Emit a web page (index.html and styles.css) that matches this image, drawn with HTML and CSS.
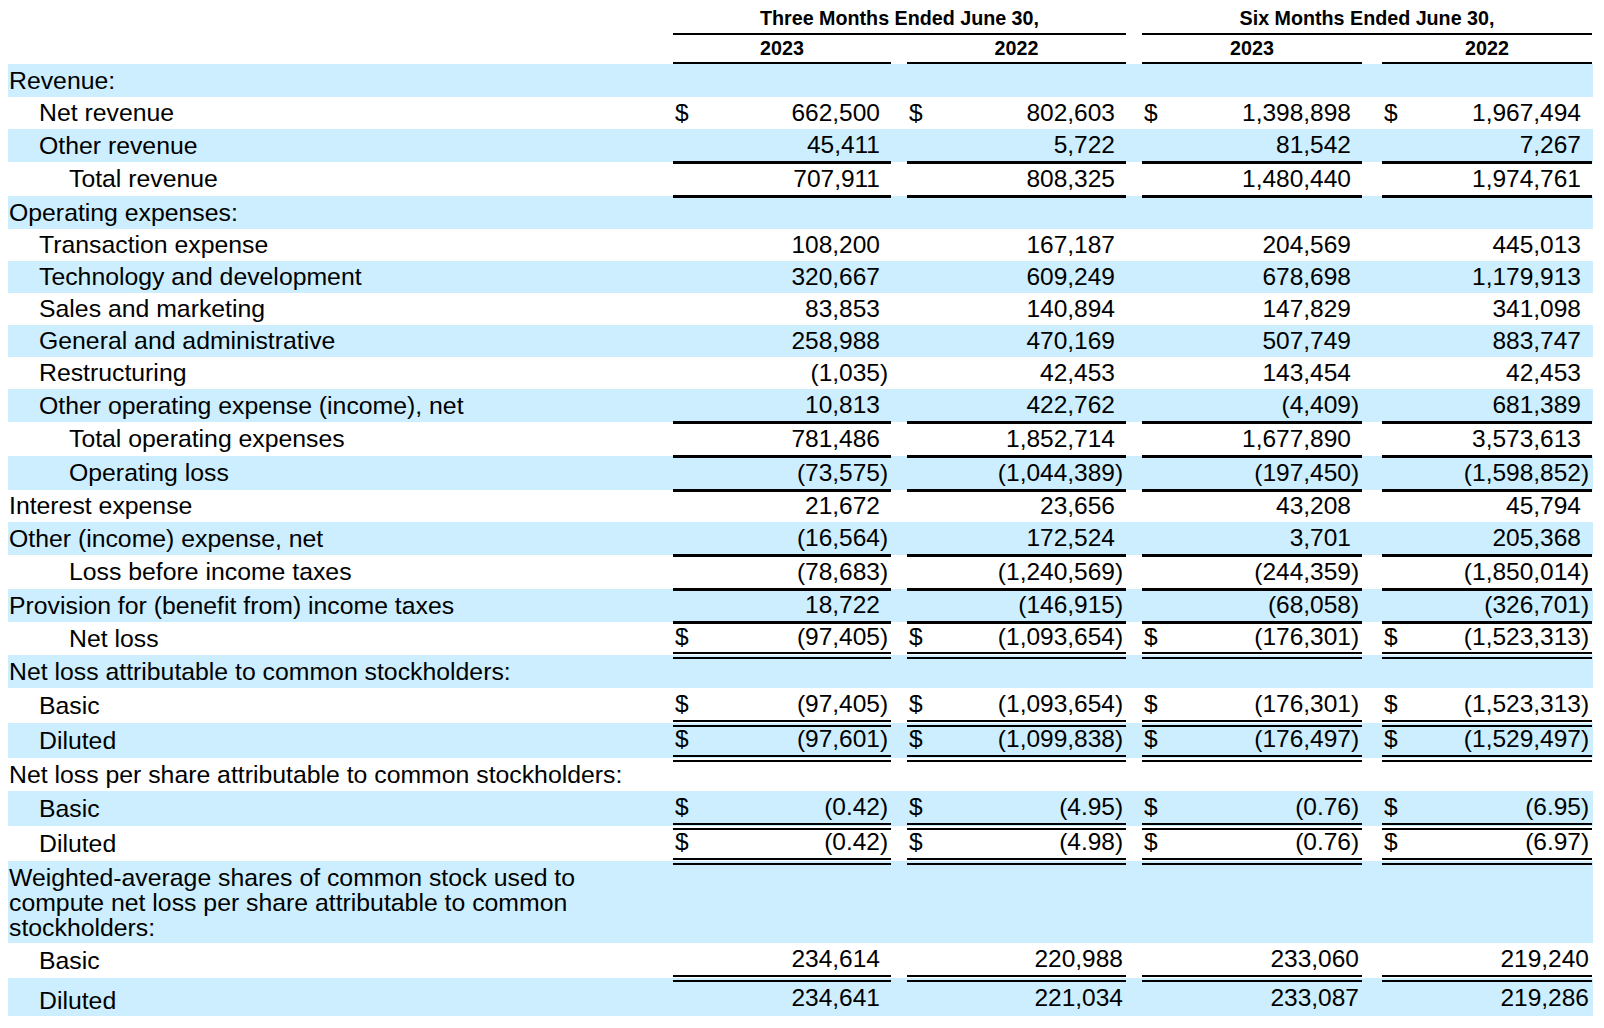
FILE: index.html
```html
<!DOCTYPE html>
<html lang="en">
<head>
<meta charset="utf-8">
<title>Condensed Consolidated Statements of Operations</title>
<link rel="stylesheet" href="styles.css">
</head>
<body>
<div class="statement">
  <div class="hrow period">
    <div class="hcell span-a">Three Months Ended June 30,</div>
    <div class="hcell span-b">Six Months Ended June 30,</div>
  </div>
  <div class="hrow years">
    <div class="hcell y1">2023</div>
    <div class="hcell y2">2022</div>
    <div class="hcell y3">2023</div>
    <div class="hcell y4">2022</div>
  </div>

  <div class="row head shade"><div class="label">Revenue:</div></div>
  <div class="row">
    <div class="label l1">Net revenue</div>
    <div class="v"><span class="cur">$</span><span class="amt">662,500</span><span class="par"></span></div>
    <div class="v"><span class="cur">$</span><span class="amt">802,603</span><span class="par"></span></div>
    <div class="v"><span class="cur">$</span><span class="amt">1,398,898</span><span class="par"></span></div>
    <div class="v"><span class="cur">$</span><span class="amt">1,967,494</span><span class="par"></span></div>
  </div>
  <div class="row sub shade">
    <div class="label l1">Other revenue</div>
    <div class="v u"><span class="amt">45,411</span><span class="par"></span></div>
    <div class="v u"><span class="amt">5,722</span><span class="par"></span></div>
    <div class="v u"><span class="amt">81,542</span><span class="par"></span></div>
    <div class="v u"><span class="amt">7,267</span><span class="par"></span></div>
  </div>
  <div class="row total">
    <div class="label l2">Total revenue</div>
    <div class="v u"><span class="amt">707,911</span><span class="par"></span></div>
    <div class="v u"><span class="amt">808,325</span><span class="par"></span></div>
    <div class="v u"><span class="amt">1,480,440</span><span class="par"></span></div>
    <div class="v u"><span class="amt">1,974,761</span><span class="par"></span></div>
  </div>

  <div class="row head shade"><div class="label">Operating expenses:</div></div>
  <div class="row">
    <div class="label l1">Transaction expense</div>
    <div class="v"><span class="amt">108,200</span><span class="par"></span></div>
    <div class="v"><span class="amt">167,187</span><span class="par"></span></div>
    <div class="v"><span class="amt">204,569</span><span class="par"></span></div>
    <div class="v"><span class="amt">445,013</span><span class="par"></span></div>
  </div>
  <div class="row shade">
    <div class="label l1">Technology and development</div>
    <div class="v"><span class="amt">320,667</span><span class="par"></span></div>
    <div class="v"><span class="amt">609,249</span><span class="par"></span></div>
    <div class="v"><span class="amt">678,698</span><span class="par"></span></div>
    <div class="v"><span class="amt">1,179,913</span><span class="par"></span></div>
  </div>
  <div class="row">
    <div class="label l1">Sales and marketing</div>
    <div class="v"><span class="amt">83,853</span><span class="par"></span></div>
    <div class="v"><span class="amt">140,894</span><span class="par"></span></div>
    <div class="v"><span class="amt">147,829</span><span class="par"></span></div>
    <div class="v"><span class="amt">341,098</span><span class="par"></span></div>
  </div>
  <div class="row shade">
    <div class="label l1">General and administrative</div>
    <div class="v"><span class="amt">258,988</span><span class="par"></span></div>
    <div class="v"><span class="amt">470,169</span><span class="par"></span></div>
    <div class="v"><span class="amt">507,749</span><span class="par"></span></div>
    <div class="v"><span class="amt">883,747</span><span class="par"></span></div>
  </div>
  <div class="row">
    <div class="label l1">Restructuring</div>
    <div class="v"><span class="amt">(1,035</span><span class="par">)</span></div>
    <div class="v"><span class="amt">42,453</span><span class="par"></span></div>
    <div class="v"><span class="amt">143,454</span><span class="par"></span></div>
    <div class="v"><span class="amt">42,453</span><span class="par"></span></div>
  </div>
  <div class="row sub shade">
    <div class="label l1">Other operating expense (income), net</div>
    <div class="v u"><span class="amt">10,813</span><span class="par"></span></div>
    <div class="v u"><span class="amt">422,762</span><span class="par"></span></div>
    <div class="v u"><span class="amt">(4,409</span><span class="par">)</span></div>
    <div class="v u"><span class="amt">681,389</span><span class="par"></span></div>
  </div>
  <div class="row total">
    <div class="label l2">Total operating expenses</div>
    <div class="v u"><span class="amt">781,486</span><span class="par"></span></div>
    <div class="v u"><span class="amt">1,852,714</span><span class="par"></span></div>
    <div class="v u"><span class="amt">1,677,890</span><span class="par"></span></div>
    <div class="v u"><span class="amt">3,573,613</span><span class="par"></span></div>
  </div>
  <div class="row total shade">
    <div class="label l2">Operating loss</div>
    <div class="v u"><span class="amt">(73,575</span><span class="par">)</span></div>
    <div class="v u"><span class="amt">(1,044,389</span><span class="par">)</span></div>
    <div class="v u"><span class="amt">(197,450</span><span class="par">)</span></div>
    <div class="v u"><span class="amt">(1,598,852</span><span class="par">)</span></div>
  </div>
  <div class="row">
    <div class="label">Interest expense</div>
    <div class="v"><span class="amt">21,672</span><span class="par"></span></div>
    <div class="v"><span class="amt">23,656</span><span class="par"></span></div>
    <div class="v"><span class="amt">43,208</span><span class="par"></span></div>
    <div class="v"><span class="amt">45,794</span><span class="par"></span></div>
  </div>
  <div class="row sub shade">
    <div class="label">Other (income) expense, net</div>
    <div class="v u"><span class="amt">(16,564</span><span class="par">)</span></div>
    <div class="v u"><span class="amt">172,524</span><span class="par"></span></div>
    <div class="v u"><span class="amt">3,701</span><span class="par"></span></div>
    <div class="v u"><span class="amt">205,368</span><span class="par"></span></div>
  </div>
  <div class="row total">
    <div class="label l2">Loss before income taxes</div>
    <div class="v u"><span class="amt">(78,683</span><span class="par">)</span></div>
    <div class="v u"><span class="amt">(1,240,569</span><span class="par">)</span></div>
    <div class="v u"><span class="amt">(244,359</span><span class="par">)</span></div>
    <div class="v u"><span class="amt">(1,850,014</span><span class="par">)</span></div>
  </div>
  <div class="row sub shade">
    <div class="label">Provision for (benefit from) income taxes</div>
    <div class="v u"><span class="amt">18,722</span><span class="par"></span></div>
    <div class="v u"><span class="amt">(146,915</span><span class="par">)</span></div>
    <div class="v u"><span class="amt">(68,058</span><span class="par">)</span></div>
    <div class="v u"><span class="amt">(326,701</span><span class="par">)</span></div>
  </div>
  <div class="row sub">
    <div class="label l2">Net loss</div>
    <div class="v uu"><span class="cur">$</span><span class="amt">(97,405</span><span class="par">)</span></div>
    <div class="v uu"><span class="cur">$</span><span class="amt">(1,093,654</span><span class="par">)</span></div>
    <div class="v uu"><span class="cur">$</span><span class="amt">(176,301</span><span class="par">)</span></div>
    <div class="v uu"><span class="cur">$</span><span class="amt">(1,523,313</span><span class="par">)</span></div>
  </div>

  <div class="row head shade"><div class="label">Net loss attributable to common stockholders:</div></div>
  <div class="row eps">
    <div class="label l1">Basic</div>
    <div class="v uu"><span class="cur">$</span><span class="amt">(97,405</span><span class="par">)</span></div>
    <div class="v uu"><span class="cur">$</span><span class="amt">(1,093,654</span><span class="par">)</span></div>
    <div class="v uu"><span class="cur">$</span><span class="amt">(176,301</span><span class="par">)</span></div>
    <div class="v uu"><span class="cur">$</span><span class="amt">(1,523,313</span><span class="par">)</span></div>
  </div>
  <div class="row eps shade">
    <div class="label l1">Diluted</div>
    <div class="v uu"><span class="cur">$</span><span class="amt">(97,601</span><span class="par">)</span></div>
    <div class="v uu"><span class="cur">$</span><span class="amt">(1,099,838</span><span class="par">)</span></div>
    <div class="v uu"><span class="cur">$</span><span class="amt">(176,497</span><span class="par">)</span></div>
    <div class="v uu"><span class="cur">$</span><span class="amt">(1,529,497</span><span class="par">)</span></div>
  </div>

  <div class="row head"><div class="label">Net loss per share attributable to common stockholders:</div></div>
  <div class="row eps shade">
    <div class="label l1">Basic</div>
    <div class="v uu"><span class="cur">$</span><span class="amt">(0.42</span><span class="par">)</span></div>
    <div class="v uu"><span class="cur">$</span><span class="amt">(4.95</span><span class="par">)</span></div>
    <div class="v uu"><span class="cur">$</span><span class="amt">(0.76</span><span class="par">)</span></div>
    <div class="v uu"><span class="cur">$</span><span class="amt">(6.95</span><span class="par">)</span></div>
  </div>
  <div class="row eps">
    <div class="label l1">Diluted</div>
    <div class="v uu"><span class="cur">$</span><span class="amt">(0.42</span><span class="par">)</span></div>
    <div class="v uu"><span class="cur">$</span><span class="amt">(4.98</span><span class="par">)</span></div>
    <div class="v uu"><span class="cur">$</span><span class="amt">(0.76</span><span class="par">)</span></div>
    <div class="v uu"><span class="cur">$</span><span class="amt">(6.97</span><span class="par">)</span></div>
  </div>

  <div class="row wrap shade"><div class="label"><span class="wrap-text">Weighted-average shares of common stock used to compute net loss per share attributable to common stockholders:</span></div></div>
  <div class="row eps">
    <div class="label l1">Basic</div>
    <div class="v uu"><span class="amt">234,614</span><span class="par"></span></div>
    <div class="v uu"><span class="amt wide">220,988</span></div>
    <div class="v uu"><span class="amt wide">233,060</span></div>
    <div class="v uu"><span class="amt wide">219,240</span></div>
  </div>
  <div class="row eps last shade">
    <div class="label l1">Diluted</div>
    <div class="v uu"><span class="amt">234,641</span><span class="par"></span></div>
    <div class="v uu"><span class="amt wide">221,034</span></div>
    <div class="v uu"><span class="amt wide">233,087</span></div>
    <div class="v uu"><span class="amt wide">219,286</span></div>
  </div>
</div>
</body>
</html>
```

FILE: styles.css
```css
* {
  box-sizing: border-box;
}

html, body {
  background: #ffffff;
}

body {
  margin: 0;
  padding: 0 8px;
  color: #000000;
  font-family: "Liberation Sans", Arial, sans-serif;
}

.statement {
  width: 1585px;
}

/* shared column template: label | col1 | gap | col2 | gap | col3 | gap | col4 */
.hrow,
.row {
  display: grid;
  grid-template-columns: 665px 218px 16px 219px 16px 220px 20px 210px;
  align-items: stretch;
}

/* ---------- header ---------- */
.hrow {
  font-size: 19.7px;
  font-weight: bold;
}

.hrow.period {
  height: 35px;
}

.hrow.years {
  height: 29px;
}

.hcell {
  display: flex;
  align-items: center;
  justify-content: center;
  border-bottom: 2px solid #000000;
}

.period .hcell {
  padding-top: 3px;
}

.span-a { grid-column: 2 / 5; }
.span-b { grid-column: 6 / 9; }
.y1 { grid-column: 2; }
.y2 { grid-column: 4; }
.y3 { grid-column: 6; }
.y4 { grid-column: 8; }

/* ---------- body rows ---------- */
.row {
  height: 32px;
  font-size: 24.5px;
  line-height: 28px;
}

.row.head { height: 33px; }
.row.sub { height: 33px; }
.row.total { height: 34px; }
.row.eps { height: 35px; }
.row.eps.last { height: 38px; }
.row.wrap { height: 82px; }

.row.shade {
  background: #cceeff;
}

.label {
  grid-column: 1;
  display: flex;
  align-items: center;
  padding-left: 1px;
  white-space: nowrap;
  font-size: 24.8px;
}

.label.l1 { padding-left: 31px; }
.label.l2 { padding-left: 61px; }

.last .label {
  padding-top: 8px;
}

.wrap .label {
  white-space: normal;
  line-height: 25px;
}

.wrap-text {
  display: block;
  max-width: 600px;
}

.row > .v:nth-child(2) { grid-column: 2; }
.row > .v:nth-child(3) { grid-column: 4; }
.row > .v:nth-child(4) { grid-column: 6; }
.row > .v:nth-child(5) { grid-column: 8; }

.v {
  display: flex;
  align-items: center;
  padding-left: 2px;
  white-space: nowrap;
}

.amt {
  flex: 1;
  text-align: right;
}

.amt.wide {
  padding-right: 3px;
}

.par {
  width: 11px;
  flex: none;
}

.u {
  border-bottom: 3px solid #000000;
  margin-bottom: -2px;
}

.uu {
  border-bottom: 7px double #000000;
  margin-bottom: -4px;
}

.last .uu {
  margin-bottom: -8px;
}
```
